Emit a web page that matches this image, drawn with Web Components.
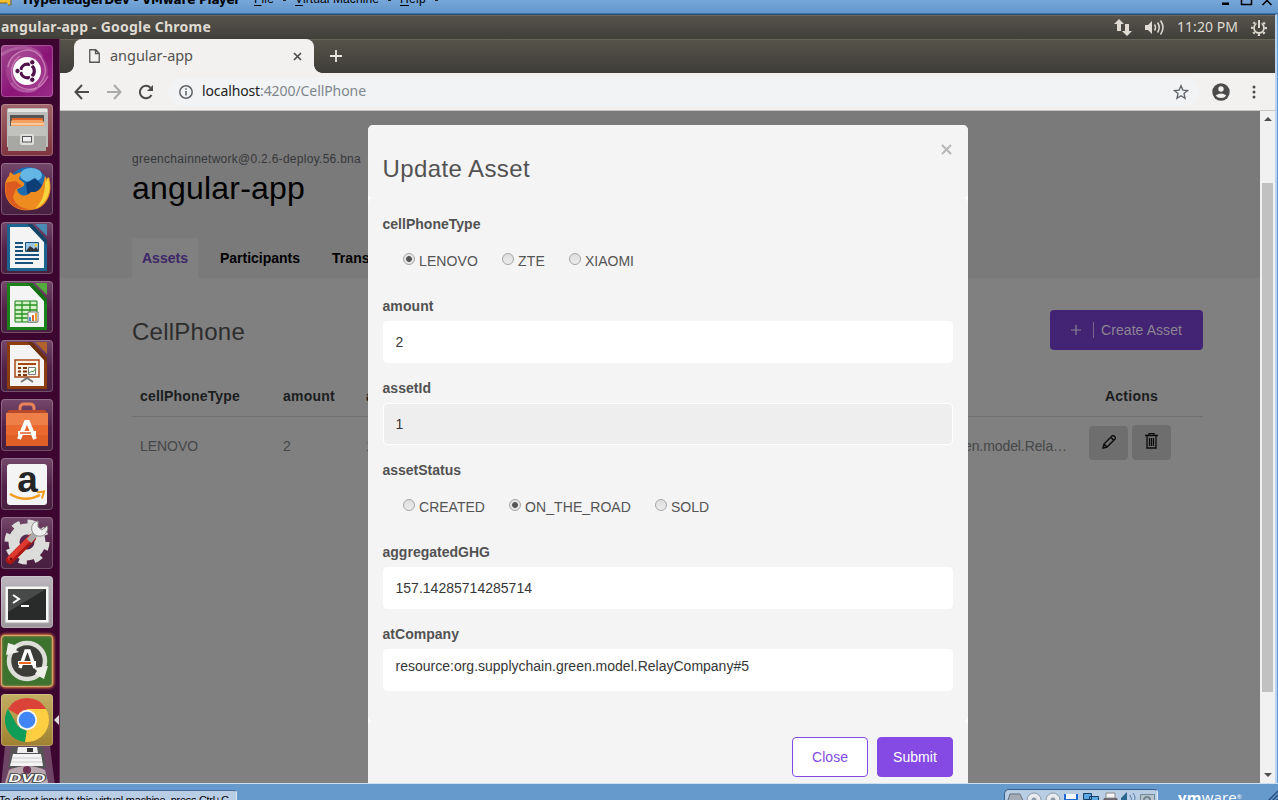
<!DOCTYPE html>
<html lang="en"><head><meta charset="utf-8"><title>angular-app</title>
<style>
html,body{margin:0;height:800px;width:1278px;overflow:hidden;background:#6699cc}
</style></head><body><vm-player></vm-player>
<script>
const define=(name,html,after)=>customElements.define(name,class extends HTMLElement{
  constructor(){super();this.attachShadow({mode:'open'}).innerHTML=typeof html==='function'?html(this):html;}
  connectedCallback(){after&&after(this);}
});

/* Single line of text spread to a given width through letter spacing */
define('fit-text','<style>:host{display:inline-block;white-space:pre}span{display:inline-block}</style><span><slot></slot></span>',el=>{
  const w=+el.getAttribute('w');if(!w)return;
  const s=el.shadowRoot.querySelector('span'),n=el.textContent.length;
  const nat=s.getBoundingClientRect().width;
  s.style.letterSpacing=((w-nat)/n)+'px';el.style.width=w+'px';
});

define('vm-titlebar',`<style>
:host{display:flex;height:14px;box-sizing:border-box;overflow:hidden;background:linear-gradient(#77a7da,#6396cb);border-bottom:1px solid #3f74ab;font:12px/16px "Liberation Sans","Noto Sans",sans-serif;color:#000}
svg.i{flex:none;width:13px;height:7px}
.t{margin:-8px 0 0 10px;font:bold 12px/16px "DejaVu Sans",sans-serif}
.m{margin:-9px 0 0 14px;display:flex}.m fit-text+i{width:3px;height:1px;background:#222;margin:9px 9px 0 9px}
.w{margin-left:auto;margin-right:4px}u{text-decoration:underline;text-underline-offset:2px}
</style><svg class="i" viewBox="0 0 13 7"><path d="M0 0h10v5H8V3H0z" fill="#f2c12e"/><path d="M0 3h7M8 5h3V0" stroke="#8a6410" fill="none"/></svg>
<fit-text class="t" w="217">HyperledgerDev - VMware Player</fit-text>
<div class="m"><fit-text w="20"><u>F</u>ile</fit-text><i></i><fit-text w="84"><u>V</u>irtual Machine</fit-text><i></i><fit-text w="26"><u>H</u>elp</fit-text><i></i></div>
<svg class="w" width="54" height="7" viewBox="0 0 54 7"><path d="M2 2.500h7v2.500H2z" fill="#000"/><path d="M21.500 0v4.500h10V0M42.500 5l9-9M51.500 5l-9-9" fill="none" stroke="#000" stroke-width="1.500"/></svg>`);

define('unity-panel',`<style>
:host{display:flex;align-items:center;height:24px;background:linear-gradient(#57544c,#403f3a);box-shadow:inset 0 1px #6a675f;font:bold 14px/24px "Noto Sans","Open Sans",sans-serif;color:#dfdbd2;position:relative}
.c{margin-left:auto;font-weight:normal}.t{margin-left:1px}
.n{margin-left:auto;margin-right:13px}.s{margin-right:12px}.c{margin:0 13px 0 0}.p{margin-right:8px}svg{flex:none}
</style><fit-text class="t" w="210">angular-app - Google Chrome</fit-text>
<svg class="n" width="18" height="17" viewBox="0 0 18 17" fill="#dfdbd2"><path d="M5 0l5 5H7v7H3V5H0zM13 17l-5-5h3V5h4v7h3z"/></svg>
<svg class="s" width="20" height="17" viewBox="0 0 20 17"><path d="M0 6h3l4-4v13l-4-4H0z" fill="#dfdbd2"/><path d="M9.500 5.500q2 3 0 6M12.500 3.500q3.500 5 0 10M15.500 1.500q5 7 0 14" fill="none" stroke="#dfdbd2" stroke-width="1.500"/></svg>
<fit-text class="c" w="61">11:20 PM</fit-text>
<svg class="p" width="16" height="17" viewBox="0 0 16 17"><g fill="none" stroke="#dfdbd2"><circle cx="8" cy="9" r="5" stroke-width="1.800"/><circle cx="8" cy="9" r="7" stroke-width="2" stroke-dasharray="2.200 3.298" stroke-dashoffset="1.100"/><path d="M8 0v9" stroke="#48463f" stroke-width="5"/><path d="M8 1v8" stroke-width="2"/></g></svg>`);

const office=(c,dark,light,inner)=>`<path d="M6 2h25l15 16v30q0 1-1 1H7q-1 0-1-1z" fill="${c}"/><path d="M9 5h20l14 15v26H9z" fill="#f4f4f4"/><path d="M26 2h5l15 16v5z" fill="${dark}"/><path d="M34 2h11q1 0 1 1v11z" fill="${light}"/>${inner}`;
const glyphs={
dash:`<circle cx="26" cy="26" r="21" fill="#c06cab" opacity=".35"/><path d="M7 22C10 5 32-2 41 14c7 12 2 20-4 27M47 31C38 50 17 47 12 34 8 24 13 15 19 11" fill="none" stroke="#efbfe2" stroke-width="1.500" opacity=".45"/><path d="M0 10C14 0 34 0 41 12M10 38c5 9 19 11 26 5" fill="none" stroke="#efbfe2" stroke-width="3" opacity=".25"/><circle cx="26" cy="26" r="14" fill="#fff"/><circle cx="26.500" cy="26" r="6.800" fill="none" stroke="#50104a" stroke-width="3.200" stroke-dasharray="12.300 1.940" stroke-dashoffset="-8"/><g fill="#50104a" stroke="#fff"><circle cx="16.500" cy="26" r="2.700"/><circle cx="31.300" cy="17.300" r="2.700"/><circle cx="31.300" cy="34.700" r="2.700"/></g>`,
files:`<path d="M6 6q0-2 2-2h37q2 0 2 2v37H6z" fill="#bcbcba"/><path d="M7 5h39v3H7z" fill="#e4e4e2"/><path d="M9 11h34v13H9z" fill="#555"/><path d="M11 14h31v9H11z" fill="#df6428"/><path d="M10 17l2-1h29l2 2v5H10z" fill="#f3a163"/><path d="M10 20h33" stroke="#fff0dc"/><path d="M7 22h38v25H7z" fill="#a7a7a4"/><path d="M7 22h38v10H7z" fill="#c1c1be"/><rect x="19" y="30" width="14" height="11" rx="2" fill="#dededb"/><rect x="21.500" y="32.500" width="9" height="5.500" fill="#eee" stroke="#555"/>`,
firefox:`<circle cx="27" cy="24" r="20" fill="#206aaf"/><ellipse cx="30" cy="12" rx="11" ry="7" fill="#64b6e5"/><path d="M25 20l9-5 7 7-5 12-10-4z" fill="#0d3e78"/><path d="M44 13l2 3 2-2c5 17-3 32-18 33C13 49 3 38 4 24c0-6 2-9 4-11l1-4 4 3 7-3-2 7 5 4c1 4-3 4-7 6 1 7 9 9 14 3 7 1 12-4 14-16z" fill="#ee8c20"/><path d="M5 20c-3 19 10 29 24 26-8 0-15-4-17-12l3-8 6-3-6-5-7 1z" fill="#dd5a20"/><path d="M44 13l1 6 2-5c5 15-2 27-13 32 8-8 11-18 10-33z" fill="#f8d43e"/>`,
writer:office('#1c638f','#154566','#4b8ab2','<path d="M14 21h8M14 25h8M14 29h8M14 33h24M14 37h24M14 41h18" stroke="#17527d" stroke-width="2"/><path d="M24.500 20.500h13v9h-13z" fill="#9cc5e3" stroke="#17527d"/><path d="M25 29l4-5 4 3 2-2 3 4z" fill="#333"/><circle cx="35" cy="23" r="1.500" fill="#f4ce37"/>'),
calc:office('#198219','#146f14','#55ac3c','<path d="M14 20h22v21H14z" fill="#d4f2c8" stroke="#198219"/><path d="M14 24h22M14 29h22M14 33h22M14 37h22M21 20v21M29 20v21" stroke="#279022" stroke-width="1.300"/><path d="M27 31h10v10H27z" fill="#fff" stroke="#777"/><path d="M29 40v-4" stroke="#3b8fce" stroke-width="2"/><path d="M32 40v-6" stroke="#e0662a" stroke-width="2"/><path d="M35 40v-8" stroke="#e6a23b" stroke-width="2"/>'),
impress:office('#8c3d10','#6e2f0d','#b0632c','<path d="M14 20h24v17H14z" fill="#fff3e8" stroke="#a64816" stroke-width="1.500"/><path d="M17 24h18" stroke="#a64816" stroke-width="2"/><path d="M17 28h3M17 31.500h3M17 35h3M22 28h4M22 31.500h4M22 35h4" stroke="#7d360f" stroke-width="2"/><path d="M27.500 27.500h7v7h-7z" fill="#fff" stroke="#777"/><path d="M28 33l3-2 1 1 3-4" stroke="#42a042" fill="none"/><path d="M20 42l6-4 6 4" stroke="#777" stroke-width="2" fill="none"/>'),
store:`<path d="M19 18V9q0-4 4-4h6q4 0 4 4v9" fill="none" stroke="#e88258" stroke-width="3"/><path d="M8 11h36l3 4H5z" fill="#b8492a"/><path d="M5 14h42v33H5z" fill="#e9692f"/><path d="M5 14h42v12H5z" fill="#ef8450" opacity=".8"/><path d="M5 36h42v11H5z" fill="#df5f27"/><path d="M18 40l7-17h2l7 17" fill="none" stroke="#fff" stroke-width="4"/><path d="M17 34h18" stroke="#fff" stroke-width="4"/><path d="M19 34h11" stroke="#e05e25" stroke-width="1.500"/>`,
amazon:`<rect x="6" y="6" width="40" height="41" rx="3" fill="#f4f4f4"/><text x="26.500" y="33.500" font-family="Liberation Sans,sans-serif" font-weight="bold" font-size="37" text-anchor="middle" fill="#252525">a</text><path d="M9 36q15 9 30 1" fill="none" stroke="#f49a1c" stroke-width="2.500"/><path d="M36 34.500l7-1-2 7" fill="none" stroke="#f49a1c" stroke-width="2"/>`,
settings:`<circle cx="26" cy="25" r="13" fill="none" stroke="#dcdcda" stroke-width="11"/><circle cx="26" cy="25" r="20" fill="none" stroke="#dcdcda" stroke-width="5" stroke-dasharray="8 7.700"/><path d="M31 21L9 43" stroke="#a91813" stroke-width="8" stroke-linecap="round"/><path d="M30 20L9 41" stroke="#dc3a31" stroke-width="5" stroke-linecap="round"/><path d="M28 24l8-9" stroke="#aaa" stroke-width="6"/><path d="M37 4c-6 1-8 7-5 12 4 5 12 4 14-2 1-2 1-4 0-5l-5 4-4-3z" fill="#eee" stroke="#8d8d8b"/><circle cx="10" cy="42" r="1.500" fill="#7b0705"/>`,
terminal:`<rect x="4" y="10" width="44" height="37" fill="#f7f7f5" stroke="#aaa"/><path d="M7 13h38v31H7z" fill="#292b2a"/><path d="M7 13h38L7 36z" fill="#484a49"/><path d="M12 19l6 4-6 4" fill="none" stroke="#fff" stroke-width="2"/><path d="M20 30h8" stroke="#fff" stroke-width="2"/>`,
updater:`<circle cx="26" cy="26" r="18" fill="#3c3d39" stroke="#deded9" stroke-width="4.500"/><path d="M5 20l2-12 10 3-2 4 3 2zM47 31l-4 13-9-5 2-3-3-3z" fill="#efefea"/><path d="M19 33l6-17h3l6 17" fill="none" stroke="#fff" stroke-width="3.500"/><path d="M17 28h18" stroke="#fff" stroke-width="4"/><path d="M18 28h12" stroke="#ef651d" stroke-width="2"/>`,
chrome:`<path d="M26 26L6.900 15A22 22 0 0 1 45.100 15z" fill="#dc4338"/><path d="M26 15h19a22 22 0 0 1-19 33l-2-10z" fill="#fdcd42"/><path d="M6.900 15l9.600 17 9.500 5-1 11A22 22 0 0 1 6.900 15z" fill="#109d58"/><path d="M26 48l9-17-9 5-2 12z" fill="#fdcd42"/><circle cx="26" cy="26" r="10.200" fill="#f4f4f4"/><circle cx="26" cy="26" r="8.300" fill="#4285f4"/>`};
define('launcher-tile',el=>`<style>:host{display:block;position:relative;width:52px;height:52px;border-radius:4px;box-sizing:border-box;background:${el.getAttribute('bg')||'linear-gradient(#74486b,#522148 55%,#492040)'};box-shadow:inset 0 0 0 1px #ffffff38${el.hasAttribute('hot')?',0 0 3px 1px #ee8542,inset 0 0 2px 1px #f39a55':''}}svg{display:block}i{position:absolute;right:-6px;top:21px;border:5px solid transparent;border-left:0;border-right-color:#ddd}</style><svg width="52" height="52" viewBox="0 0 52 52">${glyphs[el.getAttribute('icon')]}</svg>${el.hasAttribute('active')?'<i></i>':''}`);

define('unity-launcher',`<style>
:host{display:flex;flex-direction:column;gap:7px;box-sizing:border-box;width:60px;padding:6px 0 0 1px;background:#3c0630;border-right:1px solid #602c54;overflow:hidden}
launcher-tile{flex:none}.d{flex:none;display:block;margin-top:-7px;width:56px;height:40px}
</style><launcher-tile icon="dash" bg="linear-gradient(135deg,#a04b90,#8a1376 55%,#9a2c88)"></launcher-tile><launcher-tile icon="files" bg="linear-gradient(#a1646a,#7d343f)"></launcher-tile><launcher-tile icon="firefox"></launcher-tile><launcher-tile icon="writer"></launcher-tile><launcher-tile icon="calc"></launcher-tile><launcher-tile icon="impress"></launcher-tile><launcher-tile icon="store"></launcher-tile><launcher-tile icon="amazon"></launcher-tile><launcher-tile icon="settings"></launcher-tile><launcher-tile icon="terminal" bg="linear-gradient(#bdb5bd,#9e969d)"></launcher-tile><launcher-tile icon="updater" hot bg="#3d722f"></launcher-tile><launcher-tile icon="chrome" active bg="linear-gradient(#c4ae63,#9e8130)"></launcher-tile>
<svg class="d" viewBox="0 0 56 40"><path d="M4 0h45l5 40H0z" fill="#6f4565"/><path d="M10 1h32l3 21H7z" fill="#555"/><path d="M17 1h19l1 6H16z" fill="#eee"/><path d="M26 2h6v4h-6z" fill="#333"/><path d="M12 8h28l2 12H9z" fill="#f4f4f4"/><path d="M11 12h30M10 16h31" stroke="#ccc"/><path d="M8 24q18-8 36 0l4 16H3z" fill="#b9a7ae"/><circle cx="26" cy="24" r="4" fill="#6e3053"/><text x="26" y="35.500" text-anchor="middle" font-family="Liberation Sans,sans-serif" font-style="italic" font-weight="bold" font-size="10" textLength="37" lengthAdjust="spacingAndGlyphs" fill="#fff" stroke="#444" stroke-width="1.500" paint-order="stroke">DVD</text></svg>`);

define('tab-strip',`<style>
:host{display:flex;height:34px;box-sizing:border-box;padding-left:14px;background:linear-gradient(#56534a,#3e3d38);box-shadow:inset 0 1px #68655b;font:14.500px/34px "Noto Sans","Open Sans",sans-serif}
.tab{position:relative;display:flex;align-items:center;width:240px;background:#f2f1f0;border-radius:8px 8px 0 0;color:#53534f}
.tab:before,.tab:after{content:"";position:absolute;bottom:0;width:8px;height:8px;left:-8px;background:radial-gradient(circle at 0 0,transparent 7.500px,#f2f1f0 8px)}.tab:after{left:240px;background:radial-gradient(circle at 100% 0,transparent 7.500px,#f2f1f0 8px)}
.p{margin:0 10px 0 15px}.x{margin-left:auto;margin-right:12px}.n{margin:11px 0 0 16px}fit-text{margin-top:-2px}
</style><div class="tab"><svg class="p" width="11" height="14" viewBox="0 0 11 14"><path d="M.75.75h6l3.500 3.500v9H.75zM6.500 1v3.500H10" fill="none" stroke="#555" stroke-width="1.300"/></svg><fit-text w="83">angular-app</fit-text><svg class="x" width="9" height="9" viewBox="0 0 9 9"><path d="M1 1l7 7M8 1L1 8" stroke="#4d4d4b" stroke-width="1.700"/></svg></div><svg class="n" width="12" height="12" viewBox="0 0 12 12"><path d="M6 0v12M0 6h12" stroke="#e8e6e0" stroke-width="1.800"/></svg>`);

define('browser-toolbar',`<style>
:host{display:flex;align-items:center;height:38px;box-sizing:border-box;background:#f2f1f0;border-bottom:1px solid #c6c5c3;padding-left:14px;font:14px/26px "Noto Sans","Open Sans",sans-serif}
svg{flex:none;margin-right:16px}.o{display:flex;align-items:center;width:1031px;height:28px;border-radius:14px;background:#f1f3f4;margin-left:-2px;box-sizing:border-box;padding-left:11px}.o svg{margin-right:9px}.o svg:last-child{margin:0 10px 0 auto}.h,.u{margin-top:-1px}.h{color:#222}.u{color:#80868b}.a{margin:0 22px 0 13px}
</style><svg width="16" height="16" viewBox="0 0 16 16"><path d="M15 8H2M8 1L1.500 8 8 15" fill="none" stroke="#4b4b4b" stroke-width="2"/></svg><svg width="16" height="16" viewBox="0 0 16 16"><path d="M1 8h13M8 1l6.500 7L8 15" fill="none" stroke="#aaa" stroke-width="2"/></svg><svg width="16" height="16" viewBox="0 0 16 16"><path d="M13.500 11A6.200 6.200 0 1 1 12.500 3.700" fill="none" stroke="#4b4b4b" stroke-width="2"/><path d="M15 1v6H9z" fill="#4b4b4b"/></svg>
<div class="o"><svg width="14" height="14" viewBox="0 0 14 14"><circle cx="7" cy="7" r="6.200" fill="none" stroke="#5f6368" stroke-width="1.500"/><path d="M7 6v4.500M7 3.300v1.500" stroke="#5f6368" stroke-width="1.500"/></svg><fit-text class="h" w="58">localhost</fit-text><fit-text class="u" w="106">:4200/CellPhone</fit-text><svg width="16" height="16" viewBox="0 0 24 24"><path d="M12 2.500l2.800 6.600 7.100.6-5.400 4.700 1.600 7L12 17.700l-6.100 3.700 1.600-7-5.400-4.700 7.100-.6z" fill="none" stroke="#5f6368" stroke-width="2"/></svg></div>
<svg class="a" width="18" height="18" viewBox="0 0 18 18"><circle cx="9" cy="9" r="8.700" fill="#4b4b4b"/><circle cx="9" cy="6" r="2.700" fill="#f2f1f0"/><path d="M3.700 12.500Q9 8.500 14.300 12.500 12.500 15 9 15T3.700 12.500" fill="#f2f1f0"/></svg><svg width="4" height="14" viewBox="0 0 4 14" style="margin:0" fill="#4b4b4b"><circle cx="2" cy="2" r="1.500"/><circle cx="2" cy="7" r="1.500"/><circle cx="2" cy="12" r="1.500"/></svg>`);

define('scroll-bar',`<style>:host{display:flex;flex-direction:column;align-items:center;width:15px;background:#f1f1f1}.u,.d{border:4px solid transparent}.u{border-top:0;border-bottom-color:#505050;margin-top:6px}.d{border-bottom:0;border-top-color:#505050;margin-top:auto;margin-bottom:6px}.t{width:11px;height:509px;background:#c1c1c1;margin-top:62px}</style><div class="u"></div><div class="t"></div><div class="d"></div>`);

define('asset-table',`<style>
:host{display:block;margin-top:26px;font-size:14px}.r{display:grid;grid-template-columns:143px 83px 1fr 98px 24px;padding-left:8px;box-sizing:border-box}.h{height:41px;line-height:40px;border-bottom:1px solid #717171;font-weight:bold;color:#1b1d1e}.b{height:60px;line-height:58px;color:#454748}
.a{text-align:center;font-size:14px}.h .a{padding-left:3px}.b .a{display:flex;gap:4px;padding:8px;box-sizing:border-box;align-items:flex-start}.k{width:39px;height:35px;background:#6e6e6e;border-radius:4px;display:flex;align-items:center;justify-content:center;box-sizing:border-box;padding-bottom:4px}.k:first-child{margin-top:1px;height:34px;padding:0 0 2px}
.l{display:flex;justify-content:space-between}.l fit-text:last-child{margin-right:14px}
</style><div class="r h"><fit-text w="100">cellPhoneType</fit-text><fit-text w="52">amount</fit-text><fit-text w="49">assetId</fit-text><div class="a"><fit-text w="53">Actions</fit-text></div></div>
<div class="r b"><fit-text w="58">LENOVO</fit-text><span>2</span><div class="l"><span>1</span><fit-text w="123">green.model.Rela…</fit-text></div><div class="a"><div class="k"><svg width="14" height="14" viewBox="0 0 14 14"><path d="M1 13l1-4 8-8q1-1 2 0l1 1q1 1 0 2l-8 8zM9 2.500l2.500 2.500M2 9l3 3" fill="none" stroke="#0b0b0b" stroke-width="1.400"/></svg></div><div class="k"><svg width="13" height="16" viewBox="0 0 13 16"><path d="M0 2.500h13M4 2.500V.7h5v1.800M2 3v12h9V3M4.500 5v8M6.500 5v8M8.500 5v8" fill="none" stroke="#0b0b0b" stroke-width="1.300"/></svg></div></div></div>`);

define('asset-page',`<style>
:host{display:block;width:1200px;height:672px;background:#808080;font-family:"Liberation Sans",Arial,sans-serif}
header{height:167px;background:#7a7a7a;box-sizing:border-box;padding:39px 72px 0;display:flex;flex-direction:column}
.v{font-size:12px;line-height:18px;color:#37383a}.n{font-size:32px;line-height:38px;color:#000;margin-top:1px}
nav{display:flex;margin-top:auto;font:bold 14px/40px "Liberation Sans";color:#000}.on{background:#808080;color:#3b2667;width:66px;text-align:center;margin-right:22px}nav fit-text+fit-text{margin-left:32px}
main{padding:32px 57px 0 72px}.top{display:flex;justify-content:space-between;height:40px}.top>fit-text{font-size:24px;line-height:44px;color:#2d2d2d}
.c{display:flex;align-items:center;width:153px;height:40px;border-radius:4px;background:#432373;color:#8b8594;font-size:14px;box-sizing:border-box;padding-left:21px}.c i{width:1px;height:16px;background:#756589;margin:0 7px 0 12px}
</style><header><fit-text class="v" w="229">greenchainnetwork@0.2.6-deploy.56.bna</fit-text><fit-text class="n" w="173">angular-app</fit-text><nav><div class="on"><fit-text w="46">Assets</fit-text></div><fit-text w="80">Participants</fit-text><fit-text w="87">Transactions</fit-text></nav></header>
<main><div class="top"><fit-text w="113">CellPhone</fit-text><div class="c"><svg width="10" height="10"><path d="M5 0v10M0 5h10" stroke="#8b8594" stroke-width="1.200"/></svg><i></i><fit-text w="81">Create Asset</fit-text></div></div><asset-table></asset-table></main>`);

define('radio-option',el=>`<style>:host{display:flex;align-items:center;gap:4px}i{width:10px;height:10px;border:1px solid #a6a6a6;border-radius:50%;background:${el.hasAttribute('on')?'radial-gradient(circle,#555 2.500px,#e4e4e4 3.300px)':'linear-gradient(#dedede,#ececec)'};margin-top:-5px}</style><i></i><slot></slot>`);
define('form-field',el=>`<style>:host{display:block;height:82px}.l{display:block;height:26px;line-height:22px;font-weight:bold;color:#525252;margin-left:-.5px}.c{height:42px;box-sizing:border-box;border:1px solid #fff;border-radius:4px;background:#fff;padding-left:11.500px;color:#363636;line-height:40px}.ro{background:#eee}.area{line-height:32px}.radios{display:flex;gap:24px;padding-left:20px;height:44px;line-height:44px;color:#555}</style><fit-text class="l" w="${el.getAttribute('lw')}">${el.getAttribute('label')}</fit-text><div class="${el.getAttribute('kind')||'c'}"><slot></slot></div>`);
define('update-modal',`<style>
:host{display:block;box-sizing:border-box;width:600px;height:658px;background:#fff;border-radius:5px 5px 0 0;font:14px "Liberation Sans",Arial,sans-serif;overflow:hidden}
.h,.b,.f{background:#f4f4f4;border-radius:5px;box-sizing:border-box}
.h{height:73px;display:flex;justify-content:space-between;padding:0 16px 0 14.500px}.h fit-text{font-size:24px;line-height:88px;color:#525252}.h svg{margin-top:19px}
.b{height:523px;padding:15px 15px 0}
.f{height:70px;display:flex;justify-content:flex-end;gap:9px;padding:16px 15px 0}.f div{width:76px;height:40px;box-sizing:border-box;border:1px solid #854ae3;border-radius:4px;background:#fff;color:#854ae3;text-align:center;line-height:38px}.f .s{background:#854ae3;color:#fff}
</style><div class="h"><fit-text w="147.500">Update Asset</fit-text><svg width="11" height="11" viewBox="0 0 11 11"><path d="M1 1l9 9M10 1l-9 9" stroke="#b9b9b9" stroke-width="2.200"/></svg></div>
<div class="b"><form-field label="cellPhoneType" lw="98" kind="radios"><radio-option on><fit-text w="59">LENOVO</fit-text></radio-option><radio-option><fit-text w="27">ZTE</fit-text></radio-option><radio-option><fit-text w="49">XIAOMI</fit-text></radio-option></form-field>
<form-field label="amount" lw="51">2</form-field><form-field label="assetId" lw="48.500" kind="c ro">1</form-field>
<form-field label="assetStatus" lw="78.500" kind="radios"><radio-option><fit-text w="66">CREATED</fit-text></radio-option><radio-option on><fit-text w="106">ON_THE_ROAD</fit-text></radio-option><radio-option><fit-text w="38">SOLD</fit-text></radio-option></form-field>
<form-field label="aggregatedGHG" lw="107.500"><fit-text w="136.500">157.14285714285714</fit-text></form-field><form-field label="atCompany" lw="76.500" kind="c area"><fit-text w="353.500">resource:org.supplychain.green.model.RelayCompany#5</fit-text></form-field></div>
<div class="f"><div><fit-text w="36">Close</fit-text></div><div class="s"><fit-text w="44">Submit</fit-text></div></div>`);

define('browser-window',`<style>:host{display:block;width:1215px}.v{display:flex;height:672px;position:relative}update-modal{position:absolute;left:308px;top:14px}</style><tab-strip></tab-strip><browser-toolbar></browser-toolbar><div class="v"><asset-page></asset-page><scroll-bar></scroll-bar><update-modal></update-modal></div>`);

define('vm-statusbar',`<style>
:host{display:flex;justify-content:space-between;height:17px;box-sizing:border-box;background:#6699cc;border-top:1px solid #cfe0f3;overflow:hidden;font:11px/14px "Liberation Sans","Noto Sans",sans-serif;color:#000}
.m{margin-top:6px;height:12px;width:237px;background:#b9cde5;border-top:1px solid #426b9b;border-right:1px solid #dce8f5;border-radius:0 3px 0 0;padding-top:2px;box-sizing:border-box}.m fit-text{margin-left:-1px}
.r{display:flex;margin-top:5px}.d{box-sizing:border-box;width:154px;height:14px;border:1px solid #385f8c;border-right-color:#e3ecf7;border-radius:5px 4px 0 0;background:#b9cde5}.d svg{display:block}
.w{font:15px/16px "Open Sans","Noto Sans",sans-serif;color:#fff;margin:0 0 0 20px}.g{margin-left:22px;align-self:flex-start;margin-top:1px}
</style><div class="m"><fit-text w="233">To direct input to this virtual machine, press Ctrl+G.</fit-text></div>
<div class="r"><div class="d"><svg width="152" height="13" viewBox="0 0 152 13"><path d="M5 4h10l4 9H2z" fill="#a4adb5" stroke="#66717a"/><g fill="#e8ebee" stroke="#8b99a7"><circle cx="29" cy="10" r="7"/><circle cx="48" cy="10" r="7"/></g><g fill="#8c99aa"><circle cx="29" cy="10" r="2.500"/><circle cx="48" cy="10" r="2.500"/></g><path d="M59 4h14v9H59z" fill="#1e6dce"/><path d="M61 4h10v5h-10z" fill="#f3f7ff"/><path d="M78.500 3.500h8v6h-8zM84.500 6.500h9v6h-9z" fill="#5aa9e4" stroke="#173d62"/><path d="M99 8h13l2 5H97z" fill="#69636f"/><path d="M101 3h9v5h-9z" fill="#f5f5f5" stroke="#888"/><path d="M116 8l6-6v11l-6-3z" fill="#2c678f"/><path d="M125 5q3 4 0 8M128 3q4 5 0 10" stroke="#587fa8" fill="none"/><path d="M135.500 4.500h14v9h-14z" fill="#b9c5ca" stroke="#6f8896"/><circle cx="142" cy="10" r="3" fill="none" stroke="#6f8896" stroke-width="2"/></svg></div><fit-text class="w" w="64"><b>vm</b>ware<span style="font-size:6px;vertical-align:4px">®</span></fit-text><svg class="g" width="14" height="13" viewBox="0 0 14 13"><path d="M1 14L14 1M5 14l9-9M9 14l5-5" stroke="#254f81" stroke-width="1.500"/></svg></div>`);

define('vm-player',`<style>:host{display:grid;grid-template-rows:14px 769px 17px;width:1278px;height:800px}.g{box-sizing:border-box;width:1277px;height:769px;border-top:1px solid #2b4c6e;border-right:2px solid #b8d4f2}.s{display:flex;height:744px}</style><vm-titlebar></vm-titlebar><div class="g"><unity-panel></unity-panel><div class="s"><unity-launcher></unity-launcher><browser-window></browser-window></div></div><vm-statusbar></vm-statusbar>`);
</script></body></html>
